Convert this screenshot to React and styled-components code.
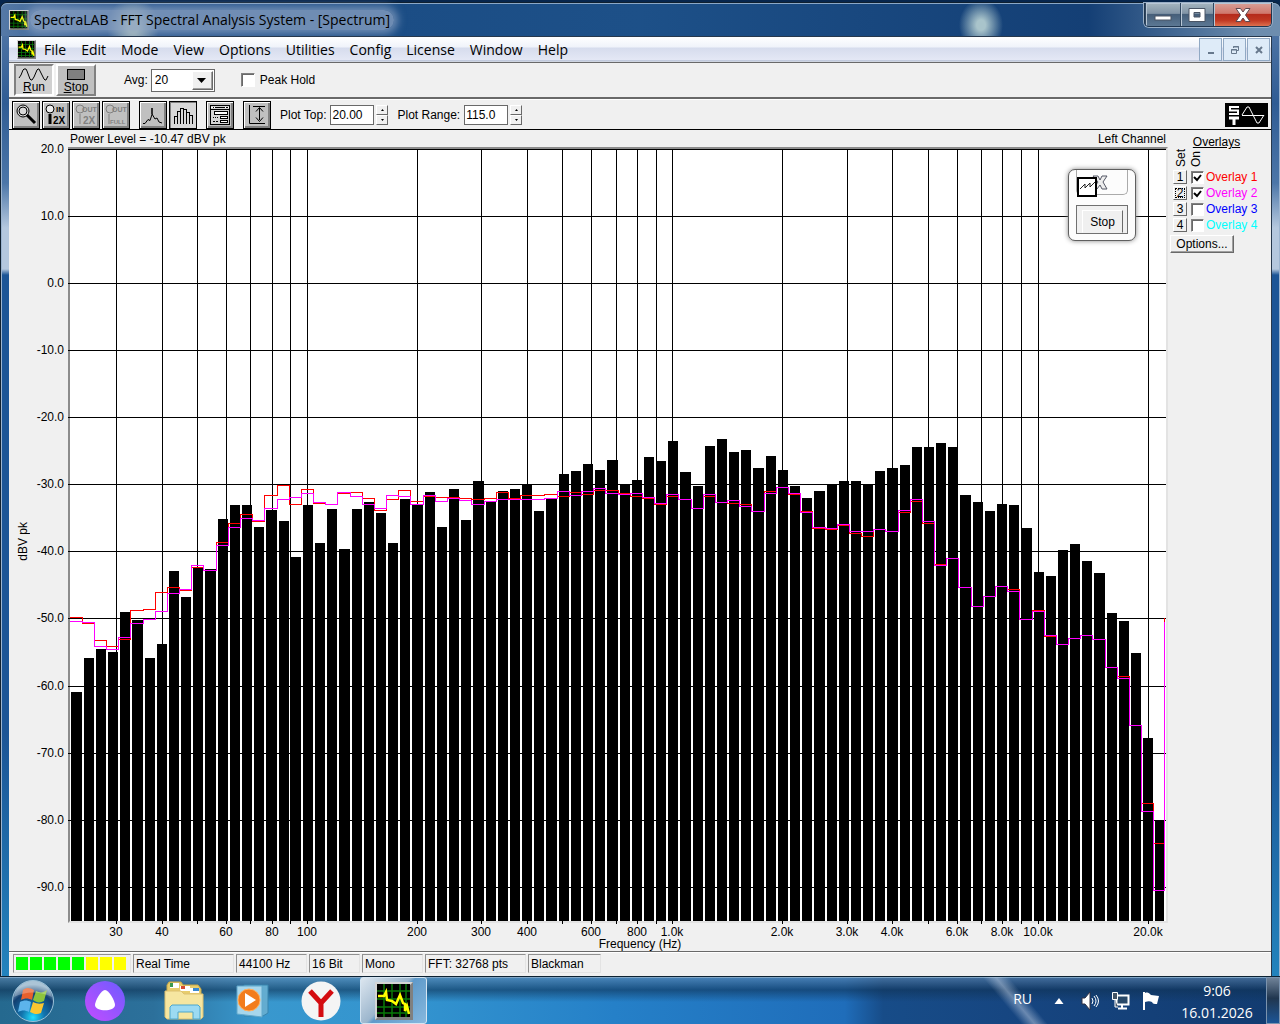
import React from "react"
import styled, { createGlobalStyle } from "styled-components"

const PLOT_TOP = 149
const PLOT_W = 1096
const PLOT_H = 772

const levels = [
  692, 658, 649, 652, 612, 620, 658, 644, 571, 597, 567, 569, 519, 505, 505,
  527, 510, 521, 557, 505, 543, 509, 549, 509, 502, 513, 543, 499, 504, 492,
  527, 489, 520, 481, 502, 491, 489, 484, 511, 499, 474, 471, 464, 470, 460,
  484, 480, 457, 461, 441, 472, 486, 446, 439, 452, 450, 468, 456, 470, 486,
  498, 491, 485, 481, 481, 485, 471, 468, 465, 447, 447, 443, 447, 495, 502,
  511, 504, 505, 528, 572, 576, 550, 544, 561, 573, 613, 621, 653, 738, 820,
]

const overlayRed = [
  617, 623, 640, 646, 639, 610, 609, 592, 587, 590, 567, 570, 542, 523, 514,
  521, 495, 485, 504, 489, 503, 504, 493, 492, 498, 510, 499, 490, 501, 496,
  497, 497, 498, 499, 498, 492, 498, 495, 495, 494, 496, 492, 494, 490, 490,
  493, 496, 498, 504, 496, 499, 508, 496, 502, 503, 504, 511, 491, 487, 494,
  511, 528, 529, 525, 533, 536, 529, 531, 512, 501, 523, 564, 558, 587, 606,
  596, 586, 589, 619, 610, 636, 644, 638, 635, 639, 667, 676, 725, 803, 843,
]

const overlayPink = [
  621, 622, 646, 649, 637, 623, 619, 611, 593, 589, 565, 570, 545, 527, 518,
  520, 508, 499, 497, 493, 502, 504, 492, 496, 504, 508, 495, 496, 504, 495,
  501, 498, 500, 504, 501, 499, 499, 499, 499, 498, 491, 495, 491, 488, 493,
  494, 493, 497, 503, 494, 499, 508, 494, 502, 500, 506, 511, 493, 487, 493,
  512, 527, 528, 524, 531, 531, 529, 531, 510, 499, 521, 565, 558, 587, 606,
  596, 586, 591, 619, 611, 635, 644, 638, 635, 639, 667, 678, 725, 811, 890,
]

const freqs = [
  30, 40, 50, 60, 70, 80, 90, 100, 200, 300, 400, 500, 600, 700, 800, 900,
  1000, 2000, 3000, 4000, 5000, 6000, 7000, 8000, 9000, 10000, 20000,
]
const named = [30, 40, 60, 80, 100, 200, 300, 400, 600, 800, 1000, 2000, 3000, 4000, 6000, 8000, 10000, 20000]
const decibels = [20, 10, 0, -10, -20, -30, -40, -50, -60, -70, -80, -90]

const barX = i => Math.ceil(1 + 12.178 * i)
const freqX = f => Math.round(237 + 365.3 * Math.log10(f / 100))
const dbY = db => Math.floor((20 - db) * 6.713)
const freqName = f => (f < 1000 ? `${f}` : `${(f / 1000).toFixed(1)}k`)

const stepPath = (rows, last) => {
  let d = `M0 ${rows[0] - PLOT_TOP + 0.5}`
  rows.forEach((row, i) => {
    const end = i === rows.length - 1 ? 1094 : barX(i + 1) - 2
    d += `V${row - PLOT_TOP + 0.5}H${end + 0.5}`
  })
  return `${d}V${last - PLOT_TOP}`
}

const App = () => (
  <>
    <Global />
    <Desktop>
      <Window>
        <TitleBar>
          <SpectraIcon size={20} />
          <Title>SpectraLAB - FFT Spectral Analysis System - [Spectrum]</Title>
          <Captions>
            <Caption $w={35} aria-label="Minimize">
              <svg width="18" height="14">
                <rect x="1" y="8" width="16" height="4" fill="#fff" stroke="#4a5565" />
              </svg>
            </Caption>
            <Caption $w={33} aria-label="Maximize">
              <svg width="18" height="14">
                <path d="M1 .5h16v13H1zM6 4.500v4.500h6V4.500z" fill="#fff" fillRule="evenodd" stroke="#4a5565" />
              </svg>
            </Caption>
            <Caption $w={58} $close aria-label="Close">
              <svg width="16" height="14">
                <path d="M1 .5h4.500L8 4l2.500-3.500H15L10.500 7l4.500 6.500h-4.500L8 10l-2.500 3.500H1L5.500 7z" fill="#fff" stroke="#5b4850" />
              </svg>
            </Caption>
          </Captions>
        </TitleBar>
        <Client>
          <MenuBar>
            <SpectraIcon size={19} />
            <Menus>
              {["File", "Edit", "Mode", "View", "Options", "Utilities", "Config", "License", "Window", "Help"].map(m => (
                <MenuItem key={m}>{m}</MenuItem>
              ))}
            </Menus>
            <ChildButton aria-label="Minimize document">
              <svg width="10" height="10"><path d="M2 8h6" stroke="#67788c" strokeWidth="2" /></svg>
            </ChildButton>
            <ChildButton aria-label="Restore document">
              <svg width="10" height="10" fill="none" stroke="#67788c"><path d="M3.500 3V1.500h5v4H7M3 2h6M1.500 4.500h5v4h-5zM1 5h6" /></svg>
            </ChildButton>
            <ChildButton aria-label="Close document">
              <svg width="10" height="10"><path d="M2 2l6 6M8 2L2 8" stroke="#67788c" strokeWidth="2" /></svg>
            </ChildButton>
          </MenuBar>
          <RunBar>
            <RunButton $down>
              <svg width="32" height="14" fill="none" stroke="#000">
                <path d="M1 11l2-3 2-5 1-1h2l1 2 3 8 1 1h1l2-3 3-7 1-1h1l2 4 3 6 1 1h1l2-4" />
              </svg>
              <span><u>R</u>un</span>
            </RunButton>
            <RunButton>
              <svg width="32" height="14"><rect x="7.500" y="2.500" width="17" height="10" fill="#808080" stroke="#000" /></svg>
              <span><u>S</u>top</span>
            </RunButton>
            <AvgLabel htmlFor="avg">Avg:</AvgLabel>
            <SelectBox>
              <select id="avg" defaultValue="20">
                <option>20</option>
              </select>
              <Arrow><svg width="10" height="5"><path d="M0 0h9L4.500 5z" /></svg></Arrow>
            </SelectBox>
            <Peak>
              <Check id="peak" type="checkbox" $size={14} />
              <label htmlFor="peak">Peak Hold</label>
            </Peak>
          </RunBar>
          <ToolBar>
            <ToolGroup>
              <Tool aria-label="Zoom">
                <svg width="24" height="24" fill="none" stroke="#000">
                  <circle cx="9" cy="8" r="6" fill="#d8d8d8" />
                  <circle cx="9" cy="8" r="4" />
                  <path d="M13 12l8 8" strokeWidth="3" />
                </svg>
              </Tool>
              <ZoomTool word="IN" sub="2X" />
              <ZoomTool word="OUT" sub="2X" off />
              <ZoomTool word="OUT" sub="FULL" off />
            </ToolGroup>
            <ToolGroup>
              <Tool aria-label="Line plot">
                <svg width="24" height="24" fill="none" stroke="#000"><path d="M2 20.500h2l3-4 2 1 2-6V5v6l3 5 2-1 2 4 3 1" /></svg>
              </Tool>
              <Tool $down aria-label="Bar plot">
                <svg width="24" height="24" fill="none" stroke="#000" shapeRendering="crispEdges">
                  <path d="M3.500 21v-8h3M6.500 21V8.500h3M9.500 21V5.500h3V21M12.500 6.500h3V21M15.500 9.500h3V21M18.500 12.500h3V21" />
                </svg>
              </Tool>
            </ToolGroup>
            <Tool aria-label="Settings">
              <svg width="24" height="24" fill="none" stroke="#000" shapeRendering="crispEdges">
                <path d="M2.500 2.500h19v19h-19z" fill="#d4d4d4" />
                <path d="M3 4.500h18" stroke="#fff" />
                <path d="M5 4.500h1m1 0h10m1 0h2M2 6.500h20" />
                <path d="M6.500 8.500h13v3h-13zM12.500 13.500h7v2h-7zM12.500 17.500h7v2h-7z" fill="#fff" />
                <path d="M5 14.500h1m1 0h1m1 0h1M5 18.500h2m1 0h2" />
              </svg>
            </Tool>
            <Tool aria-label="Plot range">
              <svg width="24" height="24" fill="none" stroke="#000">
                <path d="M4.500 2v18.500H20M8 3.500h12M14.500 5v12M11 8.500l3.500-4 3.500 4M11 14.500l3.500 4 3.500-4" />
              </svg>
            </Tool>
            <Spin id="top" label="Plot Top:" value="20.00" />
            <Spin id="range" label="Plot Range:" value="115.0" />
            <Logo viewBox="0 0 43 24" role="img" aria-label="ST">
              <path fill="#000" d="M0 0h43v24H0z" />
              <path d="M14 4H5v3.500h8V11H4" fill="none" stroke="#fff" strokeWidth="2" />
              <path d="M4 15h10M9 14v8" fill="none" stroke="#fff" strokeWidth="3" />
              <path d="M17 12.500h22M17 12l5-8h2l8 16h2l5-8" fill="none" stroke="#fff" />
            </Logo>
          </ToolBar>
          <Body>
            <AxisColumn>
              <AxisTitle>dBV pk</AxisTitle>
              <Scale>
                {decibels.map(db => (
                  <YLabel key={db} style={{ top: `${(dbY(db) / PLOT_H) * 100}%` }}>{db.toFixed(1)}</YLabel>
                ))}
              </Scale>
            </AxisColumn>
            <PlotColumn>
              <PlotHead>
                <span>Power Level = -10.47 dBV pk</span>
                <span>Left Channel</span>
              </PlotHead>
              <Plot>
                <Spectrum />
                <FloatBox>
                  <FloatHead>
                    <svg width="52" height="24">
                      <path d="M16 6h5l2 4 2-4h5l-4 6 4 7h-5l-2-4-3 4h-4l5-7z" fill="#eee" stroke="#555866" />
                      <path d="M1 8h18v18H1z" fill="#fff" stroke="#000" strokeWidth="2" />
                      <path d="M3 19l5-5v4l5-5v4l5-5" fill="none" stroke="#222" />
                    </svg>
                  </FloatHead>
                  <FloatWell><FloatStop>Stop</FloatStop></FloatWell>
                </FloatBox>
              </Plot>
              <XLabels>
                {named.map(f => (
                  <XLabel key={f} style={{ left: `${(freqX(f) / PLOT_W) * 100}%` }}>{freqName(f)}</XLabel>
                ))}
              </XLabels>
              <XTitle>Frequency (Hz)</XTitle>
            </PlotColumn>
            <Overlays>
              <OverlayTitle>Overlays</OverlayTitle>
              <Heads><Upright>Set</Upright><Upright>On</Upright></Heads>
              <OverlayRow n={1} color="#ff0000" on />
              <OverlayRow n={2} color="#ff00ff" on active />
              <OverlayRow n={3} color="#0000ff" />
              <OverlayRow n={4} color="#00ffff" />
              <OptionsButton>Options...</OptionsButton>
            </Overlays>
          </Body>
          <StatusBar>
            <Field $w={118}>
              {[0, 1, 2, 3, 4, 5, 6, 7].map(i => <Led key={i} $hot={i > 4} />)}
            </Field>
            <Field $w={101}>Real Time</Field>
            <Field $w={71}>44100 Hz</Field>
            <Field $w={51}>16 Bit</Field>
            <Field $w={61}>Mono</Field>
            <Field $w={101}>FFT: 32768 pts</Field>
            <Field $w={73}>Blackman</Field>
          </StatusBar>
        </Client>
      </Window>
      <TaskBar />
    </Desktop>
  </>
)

export default App

const Spectrum = () => (
  <PlotSvg viewBox={`0 0 ${PLOT_W} ${PLOT_H}`} preserveAspectRatio="none" shapeRendering="crispEdges">
    {decibels.map(db => <rect key={db} x="-2" y={dbY(db)} width={PLOT_W + 2} height="1" />)}
    {freqs.map(f => <rect key={f} x={freqX(f)} y="0" width="1" height={PLOT_H + 3} />)}
    {levels.map((row, i) => (
      <rect key={i} x={barX(i)} y={row - PLOT_TOP} width={i === 89 ? 9 : barX(i + 1) - barX(i) - 2} height={PLOT_H + PLOT_TOP - row} />
    ))}
    <path d={stepPath(overlayRed, 618)} fill="none" stroke="#f00" />
    <path d={stepPath(overlayPink, 622)} fill="none" stroke="#f0f" />
  </PlotSvg>
)

const SpectraIcon = ({ size }) => (
  <svg width={size} height={size} viewBox="0 0 38 38">
    <path fill="#d4d4d4" d="M0 0h38v38H0z" />
    <path fill="#808080" d="M38 0v38H0l3-3h32V3z" />
    <path fill="#000" d="M2 2h33v33H2z" />
    <path d="M9 2v33M17 2v33M25 2v33M31 2v33M2 9h33M2 17h33M2 25h33M2 31h33" stroke="#087808" strokeWidth="1.500" />
    <path d="M3 14h6l2-4 1 8 5 1 4 3 4-9 3 8 2 1v7l2-5 2 8" fill="none" stroke="#ff0" strokeWidth="2.500" />
  </svg>
)

const ZoomTool = ({ word, sub, off }) => (
  <Tool disabled={off} aria-label={`Zoom ${word} ${sub}`}>
    <svg width="24" height="24" stroke={off ? "#808080" : "#000"} fill="none">
      <circle cx="6" cy="6" r="4" fill={off ? "none" : "#eee"} />
      <path d={sub === "FULL" ? "M5 11v10" : "M6 11v10"} strokeWidth={off ? 1 : 3} />
      <IconText x={word === "IN" ? 12 : 8} y="9" $off={off} $size={word === "IN" ? 8 : 7}>{word}</IconText>
      <IconText x={sub === "2X" ? 9 : 6} y="21" $off={off} $size={sub === "2X" ? 10 : 6}>{sub}</IconText>
    </svg>
  </Tool>
)

const Spin = ({ id, label, value }) => (
  <SpinWrap>
    <label htmlFor={id}>{label}</label>
    <Value id={id} defaultValue={value} />
    <Steppers>
      <Stepper aria-label={`${label} up`}><svg width="3" height="2"><path d="M0 2h3L1.500 0z" /></svg></Stepper>
      <Stepper aria-label={`${label} down`}><svg width="3" height="2"><path d="M0 0h3L1.500 2z" /></svg></Stepper>
    </Steppers>
  </SpinWrap>
)

const OverlayRow = ({ n, color, on, active }) => (
  <Row>
    <SetButton $active={active}>{n}</SetButton>
    <Check id={`ov${n}`} type="checkbox" defaultChecked={on} $size={13} />
    <RowLabel htmlFor={`ov${n}`} $color={color}>Overlay {n}</RowLabel>
  </Row>
)

const TaskBar = () => (
  <Bar>
    <Task $w={66} aria-label="Start">
      <svg width="44" height="44" viewBox="0 0 44 44">
        <defs>
          <radialGradient id="orb" cx=".5" cy=".9" r=".8">
            <stop offset="0" stopColor="#22e0ff" /><stop offset=".35" stopColor="#1274ae" />
            <stop offset=".75" stopColor="#123f70" /><stop offset="1" stopColor="#8fb0c8" />
          </radialGradient>
        </defs>
        <circle cx="22" cy="22" r="20.500" fill="url(#orb)" stroke="#9bc1d8" />
        <path d="M12 11c4-3 7-2 11 0l-2 10c-4-2-7-2-11 0z" fill="#e8602c" />
        <path d="M25 12c4 2 7 2 11-1l-3 11c-4 2-7 2-11-1z" fill="#8cc43c" />
        <path d="M9 23c4-2 7-2 11 0l-2 10c-4-2-7-2-11 0z" fill="#5cb4ec" />
        <path d="M22 23c4 2 7 2 11 1l-3 10c-4 2-7 1-11-1z" fill="#fcc630" />
        <path d="M3 18C5 7 14 2 22 2s17 5 19 16c-12-6-26-6-38 0z" fill="#fff" opacity=".25" />
      </svg>
    </Task>
    <Task $w={78} aria-label="Alice">
      <svg width="40" height="40">
        <defs>
          <linearGradient id="alice" x1="1" y1="0" x2="0" y2="1">
            <stop offset="0" stopColor="#6c5cff" /><stop offset="1" stopColor="#c44cff" />
          </linearGradient>
        </defs>
        <circle cx="20" cy="20" r="20" fill="url(#alice)" />
        <path d="M20 9c4 0 10 11 10 15 0 7-20 7-20 0 0-4 6-15 10-15z" fill="#fff" />
      </svg>
    </Task>
    <Task $w={80} aria-label="Explorer">
      <svg width="42" height="40">
        <path d="M4 37V4l2-3h12l2 3h15l3 4v29z" fill="#e8cd6c" stroke="#c8a848" />
        <path d="M7 2h9v5H7z" fill="#fff" /><path d="M7 2h3v4H7z" fill="#3c9a4c" />
        <path d="M17 5h10v5H17z" fill="#fff" /><path d="M18 5h4v3h-4z" fill="#d84a30" />
        <path d="M27 7h9v5h-9z" fill="#fff" /><path d="M30 7h6v3h-6z" fill="#3888d0" />
        <path d="M2 10h16l3 3h19v23l-2 2H4l-2-2z" fill="#f6e6a0" stroke="#dcc070" />
        <path d="M7 38V26l2-2h26l2 2v12h-7v-7H15v7z" fill="#9cdaf2" stroke="#4ca6cc" />
      </svg>
    </Task>
    <Task $w={58} aria-label="Media player">
      <svg width="34" height="36">
        <path d="M8 2h24v28l-5 3H8z" fill="#63acd0" stroke="#3885ae" />
        <path d="M1 3h25v31l-25-3z" fill="#a6d6ec" stroke="#60a8cc" />
        <circle cx="13" cy="17" r="11" fill="#f27c1c" stroke="#ffb060" />
        <path d="M9 10v14l11-7z" fill="#fff" />
      </svg>
    </Task>
    <Task $w={78} aria-label="Yandex">
      <svg width="40" height="40">
        <circle cx="20" cy="20" r="19.500" fill="#f4f4f4" />
        <path d="M9 10l11 12 11-12M20 21v15" fill="none" stroke="#d40c10" strokeWidth="5" />
      </svg>
    </Task>
    <Task $w={67} $active aria-label="SpectraLAB"><SpectraIcon size={38} /></Task>
    <Tray>
      <Lang>RU</Lang>
      <svg width="10" height="6"><path d="M5 0l4.500 6h-9z" fill="#fff" /></svg>
      <svg width="20" height="20" fill="none" stroke="#fff">
        <path d="M2 7h3l5-6v18l-5-6H2z" fill="#fff" stroke="#334" /><path d="M12 7q2 3 0 6M14 5q4 5 0 10M16 4q5 6 0 12" />
      </svg>
      <svg width="20" height="20" fill="none" stroke="#fff">
        <path d="M5.500 4.500h12v9h-12z" fill="#284868" strokeWidth="2" /><path d="M11 14v3M7 17.500h9" strokeWidth="2" />
        <path d="M1.500 1.500h5v7h-5zM4 9v7h3" fill="#456" />
      </svg>
      <svg width="18" height="20"><path d="M2 1v18" stroke="#fff" strokeWidth="2" /><path d="M3 2c3-1 4 0 6 2l8 1-2 8c-3 0-4 0-5-2-2-1-4-1-7 0z" fill="#fff" /></svg>
    </Tray>
    <Clock><span>9:06</span><span>16.01.2026</span></Clock>
    <ShowDesktop aria-label="Show desktop" />
  </Bar>
)

const Global = createGlobalStyle`
  * {
    box-sizing: border-box;
  }

  body {
    margin: 0;
    font: 12px/14px "Liberation Sans", Arial, sans-serif;
    color: #000;
  }

  button, input, select {
    font: inherit;
    color: inherit;
    padding: 0;
    margin: 0;
    border-radius: 0;
  }

  svg {
    display: block;
    flex: none;
  }
`

const Desktop = styled.div`
  display: flex;
  flex-direction: column;
  min-height: 100vh;
  padding-top: 2px;
  background: #07264d;
`

const Window = styled.main`
  flex: 1;
  display: flex;
  flex-direction: column;
  padding: 0 8px;
  border: 1px solid #10202f;
  border-width: 1px 0 0 1px;
  border-radius: 7px 7px 0 0;
  background: linear-gradient(#5a7dab, #2f5c94 100px, #4c76a8 180px, #b5c8de 225px, #b5c8de 266px, #1c5596 272px, #1c5596 75%, #2383bd);
  box-shadow: inset 1px 1px #9db5d0, inset -1px 0 #9db5d0;
`

const TitleBar = styled.header`
  display: flex;
  align-items: center;
  height: 33px;
  margin: 0 -8px;
  padding-left: 8px;
  border-radius: 6px 6px 0 0;
  background:
    radial-gradient(ellipse 22px 26px at 980px 22px, #a9c4cb 20%, transparent),
    radial-gradient(ellipse 26px 30px at 132px 24px, #a3b8b8 20%, transparent),
    linear-gradient(90deg, #5579a6, #2a578f 8%, #1b4d85 30%, #1d5088 50%, #143f75 85%, #6d8dae 98%);
  box-shadow: inset 0 1px #8ba8c7;
`

const Title = styled.h1`
  margin: 0 0 0 1px;
  padding: 0 4px;
  border-radius: 10px;
  font: 14px/20px "Open Sans", "Noto Sans", sans-serif;
  background: rgba(145, 167, 198, 0.7);
  box-shadow: 0 0 8px 4px rgba(145, 167, 198, 0.7);
`

const Captions = styled.div`
  display: flex;
  align-self: flex-start;
  margin: 0 8px 0 auto;
  border: 1px solid #20364f;
  border-top: 0;
  border-radius: 0 0 5px 5px;
  overflow: hidden;
  box-shadow: 0 0 0 1px #9aafc6;
`

const Caption = styled.button`
  display: flex;
  align-items: center;
  justify-content: center;
  width: ${p => p.$w}px;
  height: 23px;
  border: 0;
  border-left: 1px solid #30475f;
  box-shadow: inset 1px 1px #b9c7d6;
  background: ${p =>
    p.$close
      ? "linear-gradient(#d9a198, #cf776c 45%, #b52a1b 50%, #c03822 75%, #dd704e)"
      : "linear-gradient(#a5b5bf, #8194a6 45%, #465f7a 50%, #5c7894)"};
`

const Client = styled.div`
  flex: 1;
  display: flex;
  flex-direction: column;
  border: 1px solid #26384d;
  border-left-width: 0;
  border-bottom: 0;
  background: #f0f0f0;
`

const MenuBar = styled.nav`
  display: flex;
  align-items: center;
  height: 26px;
  gap: 1px;
  padding: 0 1px 0 8px;
  background: linear-gradient(#fff, #f0f3fa 10px, #d6dced 11px, #e4e8f5 23px, #9eabc4 24px, #fff 25px);
  border-bottom: 1px solid #696969;
`

const Menus = styled.div`
  display: flex;
  flex: 1;
  gap: 1px;
`

const MenuItem = styled.button`
  padding: 0 7px;
  border: 0;
  background: none;
  font: 14px/20px "Open Sans", "Noto Sans", sans-serif;
`

const ChildButton = styled.button`
  display: flex;
  align-items: center;
  justify-content: center;
  width: 23px;
  height: 23px;
  border: 1px solid #91a9c4;
  background: #deebf8;
`

const RunBar = styled.div`
  display: flex;
  align-items: center;
  height: 36px;
  padding: 0 5px;
  border-bottom: 2px solid #696969;
`

const RunButton = styled.button`
  width: 40px;
  height: 32px;
  margin-right: 2px;
  padding: 1px 2px;
  line-height: 12px;
  border: 2px solid;
  border-color: ${p => (p.$down ? "#808080 #fff #fff #808080" : "#fff #808080 #808080 #fff")};
  background: ${p => (p.$down ? "#d0d0d0" : "#c0c0c0")};
`

const AvgLabel = styled.label`
  margin: 0 3px 0 26px;
`

const SelectBox = styled.div`
  position: relative;

  select {
    display: block;
    width: 64px;
    height: 23px;
    padding-left: 3px;
    appearance: none;
    border: 1px solid #696969;
    background: #fff;
  }
`

const Arrow = styled.span`
  position: absolute;
  top: 2px;
  right: 2px;
  display: flex;
  align-items: center;
  justify-content: center;
  width: 21px;
  height: 19px;
  pointer-events: none;
  background: #f0f0f0;
  border: 1px solid;
  border-color: #fff #696969 #696969 #fff;
  box-shadow: inset -1px -1px #a0a0a0;
`

const Peak = styled.div`
  display: flex;
  align-items: center;
  gap: 5px;
  margin-left: 26px;
`

const Check = styled.input`
  appearance: none;
  flex: none;
  width: ${p => p.$size}px;
  height: ${p => p.$size}px;
  border: 1px solid;
  border-color: #808080 #fff #fff #808080;
  background: #fff;
  box-shadow: inset 1px 1px #696969;

  &:checked {
    background: #fff
      url("data:image/svg+xml,%3Csvg xmlns='http://www.w3.org/2000/svg' width='11' height='11'%3E%3Cpath d='M2 5l3 3 4-5' fill='none' stroke='black' stroke-width='2'/%3E%3C/svg%3E")
      center no-repeat;
  }
`

const ToolBar = styled.div`
  display: flex;
  align-items: center;
  gap: 9px;
  height: 31px;
  padding: 0 3px;
  border-top: 1px solid #fff;
  border-bottom: 1px solid #000;
`

const ToolGroup = styled.div`
  display: flex;
  gap: 2px;
`

const Tool = styled.button`
  width: 28px;
  height: 28px;
  padding: 1px;
  border: 1px solid #000;
  background: ${p => (p.$down ? "#d8d8d8" : "#c0c0c0")};
  box-shadow: ${p =>
    p.$down ? "inset 1px 1px #808080" : "inset 1px 1px #fff, inset -1px -1px #808080, inset -2px -2px #808080"};
`

const IconText = styled.text`
  font: bold ${p => p.$size}px "Liberation Sans", Arial, sans-serif;
  fill: ${p => (p.$off ? "#808080" : "#000")};
  stroke: none;
`

const SpinWrap = styled.div`
  display: flex;
  align-items: center;

  label {
    margin-right: 4px;
  }
`

const Value = styled.input`
  width: 44px;
  height: 20px;
  padding: 0 1px;
  border: 1px solid #696969;
  background: #fff;
`

const Steppers = styled.div`
  margin-left: 2px;
`

const Stepper = styled.button`
  display: flex;
  align-items: center;
  justify-content: center;
  width: 12px;
  height: 10px;
  border: 1px solid;
  border-color: #fff #696969 #696969 #fff;
  background: #f0f0f0;
`

const Logo = styled.svg`
  width: 43px;
  height: 24px;
  margin-left: auto;
`

const Body = styled.section`
  flex: 1;
  display: flex;
`

const AxisColumn = styled.div`
  flex: none;
  display: flex;
  width: 59px;
  padding: 19px 0 30px;
`

const AxisTitle = styled.div`
  align-self: center;
  flex: none;
  width: 20px;
  line-height: 20px;
  margin: 12px 0 0 4px;
  writing-mode: vertical-rl;
  transform: rotate(180deg);
`

const Scale = styled.div`
  position: relative;
  flex: 1;
`

const YLabel = styled.span`
  position: absolute;
  right: 4px;
  transform: translateY(-50%);
`

const PlotColumn = styled.div`
  flex: 1;
  display: flex;
  flex-direction: column;
  min-width: 0;
`

const PlotHead = styled.div`
  display: flex;
  justify-content: space-between;
  height: 17px;
  padding: 2px 2px 0;
`

const Plot = styled.div`
  position: relative;
  flex: 1;
  min-height: 400px;
  border: 2px solid;
  border-color: #8c8c8c #e3e3e3 #e3e3e3 #8c8c8c;
  background: #fff;
`

const PlotSvg = styled.svg`
  position: absolute;
  inset: 0;
  width: 100%;
  height: 100%;
  overflow: visible;
`

const FloatBox = styled.div`
  position: absolute;
  top: 20px;
  right: 30px;
  width: 68px;
  height: 72px;
  padding: 0 7px;
  border: 1px solid #606060;
  border-radius: 7px;
  background: #fcfcfc;
  box-shadow: 0 0 5px #888;
`

const FloatHead = styled.div`
  height: 25px;
  border: 1px solid #aaa;
  border-top: 0;
  border-radius: 0 0 5px 5px;

  svg {
    overflow: visible;
  }
`

const FloatWell = styled.div`
  height: 29px;
  margin-top: 10px;
  padding: 4px 4px 0 5px;
  border: 1px solid #707070;
  background: #f0f0f0;
`

const FloatStop = styled.button`
  width: 100%;
  height: 23px;
  border: 1px solid;
  border-color: #fff #696969 #f0f0f0 #fff;
  background: #f0f0f0;
`

const XLabels = styled.div`
  position: relative;
  height: 14px;
  margin: 2px 2px 0;
`

const XLabel = styled.span`
  position: absolute;
  transform: translateX(-50%);
`

const XTitle = styled.div`
  height: 12px;
  padding-left: 44px;
  line-height: 10px;
  text-align: center;
`

const Overlays = styled.aside`
  flex: none;
  width: 103px;
  padding: 5px 0 0 2px;
`

const OverlayTitle = styled.div`
  padding-right: 8px;
  text-align: center;
  text-decoration: underline;
`

const Heads = styled.div`
  display: flex;
  align-items: flex-end;
  gap: 1px;
  height: 20px;
  padding: 0 0 2px 4px;
`

const Upright = styled.span`
  writing-mode: vertical-rl;
  transform: rotate(180deg);
`

const Row = styled.div`
  display: flex;
  align-items: center;
  height: 16px;
  padding-left: 3px;
`

const SetButton = styled.button`
  flex: none;
  width: 14px;
  height: 14px;
  margin-right: 4px;
  line-height: 11px;
  border: 1px solid;
  border-color: #fff #696969 #696969 #fff;
  background: #f0f0f0;
  outline: ${p => (p.$active ? "1px dotted #000" : "0")};
  outline-offset: -3px;
`

const RowLabel = styled.label`
  margin-left: 2px;
  white-space: nowrap;
  color: ${p => p.$color};
`

const OptionsButton = styled.button`
  width: 64px;
  height: 18px;
  margin-top: 2px;
  border: 1px solid;
  border-color: #fff #696969 #696969 #fff;
  background: #f0f0f0;
  box-shadow: inset -1px -1px #a0a0a0;
`

const StatusBar = styled.footer`
  display: flex;
  align-items: flex-start;
  gap: 2px;
  height: 25px;
  padding: 2px 4px;
  border-top: 1px solid #696969;
  box-shadow: inset 0 1px #fff;
`

const Field = styled.div`
  display: flex;
  align-items: center;
  gap: 2px;
  width: ${p => p.$w}px;
  height: 19px;
  padding-left: 2px;
  border: 1px solid;
  border-color: #909090 #e3e3e3 #e3e3e3 #909090;
  white-space: nowrap;
`

const Led = styled.i`
  width: 12px;
  height: 13px;
  background: ${p => (p.$hot ? "#ff0" : "#0f0")};
`

const Bar = styled.footer`
  display: flex;
  align-items: stretch;
  height: 48px;
  border-top: 1px solid #0d2233;
  box-shadow: inset 0 1px #7fa5c5;
  color: #fff;
  background:
    linear-gradient(rgba(100, 140, 180, 0.6), rgba(15, 50, 85, 0.6) 13px, transparent 25px),
    linear-gradient(90deg, #25698f, #2c709b 12%, #3998ce 20%, #3394cf 32%, #2580c8 48%, #1f6dba 66%, #174c88 69%, #164580 80%, #123b70);
`

const Task = styled.button`
  display: flex;
  align-items: center;
  justify-content: center;
  width: ${p => p.$w}px;
  border: ${p => (p.$active ? "1px solid #d5e5f2" : "0")};
  border-radius: 3px;
  background: ${p => (p.$active ? "linear-gradient(135deg, #dce6ef, #9cb6cd 45%, #5f9aca 50%, #86b8de)" : "none")};
`

const Tray = styled.div`
  display: flex;
  align-items: center;
  gap: 11px;
  margin-left: auto;
  padding-left: 36px;
  background: linear-gradient(50deg, transparent 20%, rgba(190, 205, 225, 0.5) 26%, transparent 32%);

  svg:first-of-type {
    margin-right: 5px;
  }
`

const Lang = styled.span`
  margin-right: 11px;
  padding-bottom: 4px;
  font: 14px/20px "Open Sans", "Noto Sans", sans-serif;
`

const Clock = styled.time`
  display: flex;
  flex-direction: column;
  align-items: center;
  width: 98px;
  margin-left: 8px;
  padding-top: 3px;
  font: 14px/22px "Open Sans", "Noto Sans", sans-serif;
`

const ShowDesktop = styled.button`
  width: 14px;
  border: 1px solid #7b93ae;
  background: linear-gradient(#6f8298, #20364f 45%, #1c5596);
`
